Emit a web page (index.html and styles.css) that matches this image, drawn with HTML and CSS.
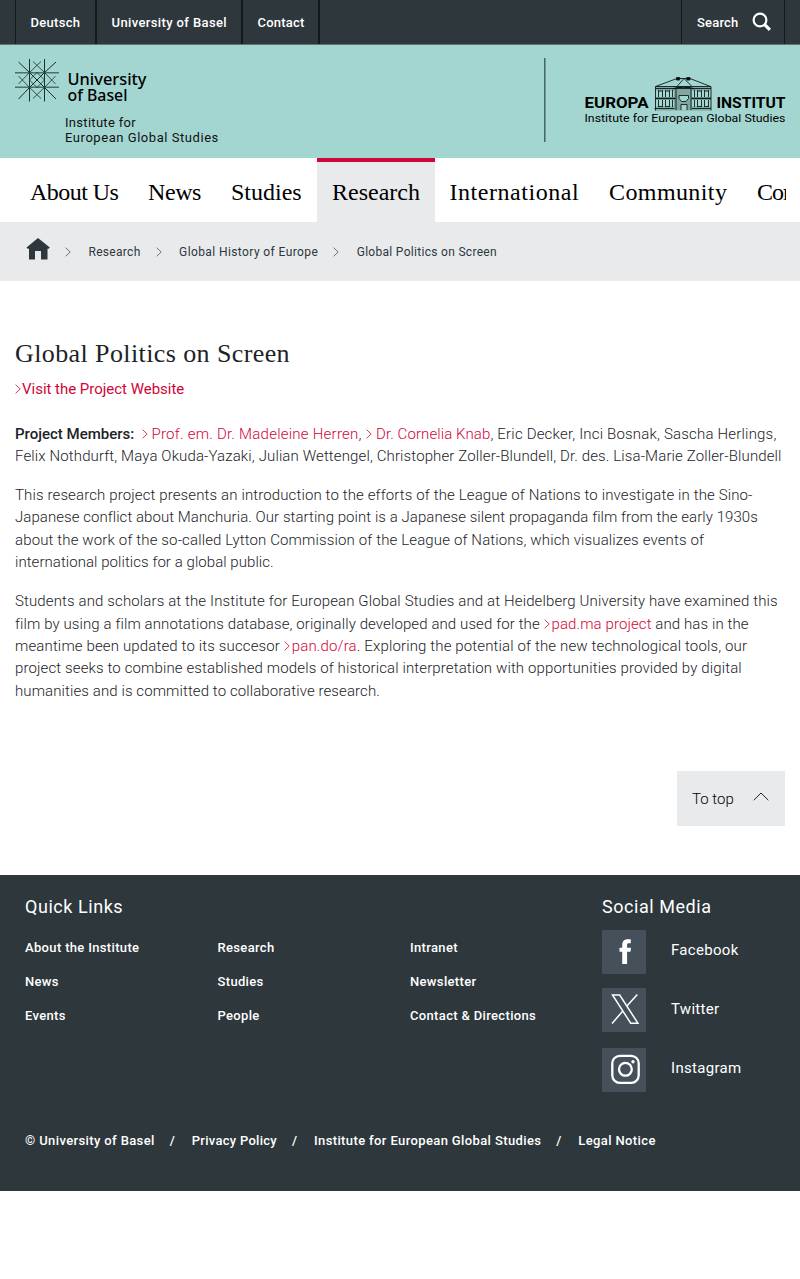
FILE: index.html
```html
<!DOCTYPE html>
<html lang="en">
<head>
<meta charset="utf-8">
<title>Global Politics on Screen</title>
<link rel="stylesheet" href="styles.css">
</head>
<body>
<svg class="defs" width="0" height="0" aria-hidden="true">
  <symbol id="chev" viewBox="0 0 6 10"><path d="M.6.7 5.2 5 .6 9.3" fill="none" stroke="currentColor" stroke-width=".8"/></symbol>
</svg>
<div class="topbar">
  <nav class="meta"><a class="m1">Deutsch</a><a class="m2">University of Basel</a><a class="m3">Contact</a></nav>
  <a class="search"><span>Search</span><svg width="20" height="20" viewBox="0 0 20 20"><circle cx="8" cy="8" r="6.4" fill="none" stroke="#fff" stroke-width="2.2"/><path d="m12.7 12.7 5.2 5.2" stroke="#fff" stroke-width="3.2"/></svg></a>
</div>
<header class="brand">
  <div class="unibas">
    <svg class="logo" width="140" height="48" viewBox="0 0 140 48">
      <g fill="none" stroke="#16302f" stroke-width="1">
        <path d="M14.500 1v42.500M29.500 1v42.500"/>
        <path stroke-width="1.600" stroke="#4b716e" d="M0 14.700h44M0 29.300h44"/>
        <path d="M3.500 4 14.500 14.500 29.500 29.500 41 41M41 4 29.500 14.500 14.500 29.500 3.500 41"/>
        <path stroke-width=".8" d="M14.500 14.500 26 3.500M29.500 14.500 18 3.500M14.500 29.500 26 40.500M29.500 29.500 18 40.500M14.500 14.500 3.500 26M14.500 29.500 3.500 18M29.500 14.500 40.500 26M29.500 29.500 40.500 18M14.500 22 22 14.500 29.500 22 22 29.500z"/>
      </g>
      <g class="logotype"><text x="52.500" y="26.500" textLength="79" lengthAdjust="spacingAndGlyphs">University</text><text x="52.500" y="43" textLength="60" lengthAdjust="spacingAndGlyphs">of Basel</text></g>
    </svg>
    <p class="unit"><span class="unit1">Institute for</span><br><span>European Global Studies</span></p>
  </div>
  <svg class="europa" width="242" height="84" viewBox="0 0 242 84">
    <path d="M.8 0v84" stroke="#355654" stroke-width="1.300"/>
    <g class="inst"><text x="40.500" y="50" textLength="64" lengthAdjust="spacingAndGlyphs">EUROPA</text><text x="172.500" y="50" textLength="69" lengthAdjust="spacingAndGlyphs">INSTITUT</text></g>
    <text class="instsub" x="40.500" y="64.300" textLength="201" lengthAdjust="spacingAndGlyphs">Institute for European Global Studies</text>
    <g fill="none" stroke="#101c1b" stroke-width=".9">
      <path fill="#7fa8a3" stroke="none" d="M111 28.500h56v4h-56zM130 32h18v20h-18zM111 39h56v2.500h-56zM111 48.500h56v4h-56z"/>
      <path d="M111.500 28.500 133 20.500M146 20.500l20.500 8M136 20.500h7M111.500 28.500h55.500M111.500 30.500h55.500M111.500 28.500v24M167 28.500v24M110.500 50.500h20M148 50.500h19M140 20.500l-7 8M140 20.500l8 8"/>
      <path stroke-width="1.300" d="M128.500 31q11-4 22 0M111.500 40.500h20M147.500 40.500h19.500"/>
      <path d="M132 31v21M147 31v21"/>
      <path d="M114.500 32v7M118.500 32v7M121.500 32v7M125.500 32v7M128.500 32v7M150.500 32v7M153.500 32v7M157.500 32v7M160.500 32v7M164.500 32v7M114.500 42v7M118.500 42v7M121.500 42v7M125.500 42v7M128.500 42v7M150.500 42v7M153.500 42v7M157.500 42v7M160.500 42v7M164.500 42v7M114.500 33h4M121.500 33h4M153.500 33h4M160.500 33h4M114.500 48.500h4M121.500 48.500h4M153.500 48.500h4M160.500 48.500h4"/>
      <path fill="#a3d6d0" d="M135 37.500h9.500v3l-2.500 3h-4.500l-2.500-3zM137 52v-5.500h6V52"/>
      <path fill="#000" d="M132.500 19.500h3.200v2.500h-3.200zM142.800 19.500h3.200v2.500h-3.200z"/>
    </g>
  </svg>
</header>
<nav class="main"><a class="n1">About Us</a><a class="n2">News</a><a class="n3">Studies</a><a class="n4 active">Research</a><a class="n5">International</a><a class="n6">Community</a><a class="n7">Continuing Education</a></nav>
<nav class="crumbs">
  <svg class="home" width="24" height="22" viewBox="0 0 24 22"><path d="M12 0 .5 9.500l1.200 1.300H3V21.500H9V13h6v8.500h6.500V10.800h1.100L23.800 9.500z" fill="#2d373c"/></svg>
  <svg class="sep"><use href="#chev"/></svg><a class="c1">Research</a>
  <svg class="sep"><use href="#chev"/></svg><a class="c2">Global History of Europe</a>
  <svg class="sep"><use href="#chev"/></svg><a class="c3">Global Politics on Screen</a>
</nav>
<main class="content">
  <h1>Global Politics on Screen</h1>
  <p class="visit"><a class="link"><svg class="arrow"><use href="#chev"/></svg>Visit the Project Website</a></p>
  <p class="para members"><span class="loose"><b>Project Members:</b>&nbsp; <a class="link herren"><svg class="arrow"><use href="#chev"/></svg>Prof. em. Dr. Madeleine Herren</a>, <a class="link knab"><svg class="arrow"><use href="#chev"/></svg>Dr. Cornelia Knab</a>, Eric Decker, Inci Bosnak, Sascha Herlings,</span><br><span class="std">Felix Nothdurft, Maya Okuda-Yazaki, Julian Wettengel, Christopher Zoller-Blundell, Dr. des. Lisa-Marie Zoller-Blundell</span></p>
  <p class="para"><span class="std">This research project presents an introduction to the efforts of the League of Nations to investigate in the Sino-</span><br><span class="tight">Japanese conflict about Manchuria. Our starting point is a Japanese silent propaganda film from the early 1930s</span><br><span class="wide">about the work of the so-called Lytton Commission of the League of Nations, which visualizes events of</span><br><span class="tight">international politics for a global public.</span></p>
  <p class="para"><span class="std">Students and scholars at the Institute for European Global Studies and at Heidelberg University have examined this</span><br>film by using a film annotations database, originally developed and used for the <a class="link"><svg class="arrow"><use href="#chev"/></svg>pad.ma project</a> and has in the<br><span class="wide">meantime been updated to its succesor <a class="link"><svg class="arrow"><use href="#chev"/></svg>pan.do/ra</a>. Exploring the potential of the new technological tools, our</span><br><span class="std">project seeks to combine established models of historical interpretation with opportunities provided by digital</span><br>humanities and is committed to collaborative research.</p>
  <a class="totop"><span>To top</span><svg width="16" height="9" viewBox="0 0 16 9"><path d="M.7 8.200 8 1l7.300 7.200" fill="none" stroke="#222" stroke-width="1"/></svg></a>
</main>
<footer class="footer">
  <div class="cols">
    <section class="quick"><h2>Quick Links</h2>
      <div class="links"><a>About the Institute</a><a>Research</a><a>Intranet</a><a>News</a><a>Studies</a><a>Newsletter</a><a>Events</a><a>People</a><a>Contact &amp; Directions</a></div>
    </section>
    <section class="social"><h2>Social Media</h2>
      <a><svg width="44" height="44" viewBox="0 0 44 44"><path fill="#fff" d="M20.200 34V21.800h-2.700v-4h2.700v-2.600c0-4 2-6 5.500-6h3.100v4h-2c-1.400 0-1.700.6-1.700 1.900v2.700h3.900l-.5 4h-3.400V34z"/></svg><span>Facebook</span></a>
      <a><svg width="44" height="44" viewBox="0 0 44 44"><path fill="none" stroke="#fff" stroke-width="1.500" d="M10.500 7h7.200l18.200 28.200h-7.200zM35.300 6.500 24.500 18.500M21.300 22.500 10 35.500"/></svg><span>Twitter</span></a>
      <a><svg width="44" height="44" viewBox="0 0 44 44"><g fill="none" stroke="#fff" stroke-width="2.300"><rect x="10.300" y="7.800" width="26.400" height="27" rx="7.500"/><circle cx="23.400" cy="21.300" r="6.400"/></g><circle cx="31" cy="13.700" r="1.700" fill="#fff"/></svg><span>Instagram</span></a>
    </section>
  </div>
  <div class="legal"><a>© University of Basel</a><i>/</i><a class="l2">Privacy Policy</a><i>/</i><a>Institute for European Global Studies</a><i>/</i><a>Legal Notice</a></div>
</footer>
</body>
</html>
```
FILE: styles.css
```css
* { box-sizing: border-box; }
body { margin: 0; background: #fff; color: #1c2327; font-family: Roboto, "Liberation Sans", sans-serif; }
h1, h2, p { margin: 0; font-weight: 400; }
.defs { position: absolute; }

.topbar { display: flex; justify-content: space-between; height: 45px; padding: 0 15px; background: #2d373c; border-bottom: 1px solid #5f7476; color: #fff; font-size: 13px; font-weight: 500; letter-spacing: .2px; line-height: 45px; }
.meta { display: flex; }
.meta a { padding-left: 14.500px; border-right: 2px solid #14191b; }
.meta .m1 { width: 82px; padding-left: 14.500px; border-left: 1px solid #14191b; letter-spacing: .3px; }
.m2 { width: 146px; letter-spacing: .38px; }
.m3 { width: 77px; }
.search { display: flex; align-items: center; gap: 13px; width: 104px; padding-left: 15px; border: 1px solid #14191b; border-width: 0 1px; }

.brand { display: flex; justify-content: space-between; height: 113px; padding: 13px 14px 0 15px; background: #a3d6d0; }
.logo { display: block; }
.logotype { font: 500 17px "Noto Sans", sans-serif; fill: #000; }
.unit { padding: 9px 0 0 50px; color: #111; font-size: 13px; line-height: 15px; letter-spacing: .55px; }
.unit1 { letter-spacing: .3px; }
.inst { font: 700 15.500px Roboto, sans-serif; fill: #000; }
.instsub { font: 400 11px Roboto, sans-serif; fill: #000; }

.main { display: flex; height: 64px; margin: 0 14px 0 15px; overflow: hidden; color: #000; font: 24px/61px "Liberation Serif", serif; white-space: nowrap; }
.main a { flex: none; padding-left: 15px; border-top: 4px solid transparent; }
.main .active { background: #e9eaec; border-top-color: #d20537; }
.n1 { width: 118px; letter-spacing: -.55px; }
.n2 { width: 83px; letter-spacing: -.4px; }
.n3 { width: 101px; }
.n4 { width: 117.500px; letter-spacing: 0; }
.n5 { width: 159.500px; letter-spacing: .55px; }
.n6 { width: 148px; letter-spacing: .4px; }
.n7 { letter-spacing: -1px; }

.crumbs { display: flex; align-items: center; height: 59px; padding-left: 26px; background: #e9eaec; color: #2d373c; font-size: 12px; letter-spacing: .3px; }
.home { margin-top: -6px; }
.sep { width: 6px; height: 10px; margin: 0 17.500px 0 15px; color: #555; }
.home + .sep { margin: 0 17.500px 0 15px; }
.c2 { letter-spacing: .4px; }

.content { display: flex; flex-direction: column; height: 593.500px; padding: 58px 15px 0; }
h1 { font: 26px/30px "Liberation Serif", serif; letter-spacing: .4px; }
.visit { padding-top: 9px; font-size: 15px; line-height: 22px; letter-spacing: -.02px; }
.link { color: #d20537; }
.arrow { width: 6px; height: 10px; margin-right: 2px; }
.visit .arrow { margin-right: 1px; }
.members .arrow { margin-right: 3.500px; }
.para { padding-bottom: 16.600px; font-size: 15px; font-weight: 300; line-height: 22.400px; letter-spacing: .1px; white-space: nowrap; }
.visit + .para { padding-top: 22.600px; }
.para b { font-weight: 500; letter-spacing: 0; }
.std { letter-spacing: .126px; }
.tight { letter-spacing: .055px; }
.wide { letter-spacing: .14px; }
.loose { letter-spacing: .19px; }
.herren { letter-spacing: .24px; }
.knab { margin-left: 1px; letter-spacing: .1px; }
.totop { display: flex; align-self: flex-end; justify-content: space-between; align-items: center; width: 108px; height: 55px; margin-top: 52.600px; padding: 0 16px 0 15px; background: #e9eaec; color: #000; font-size: 15px; font-weight: 300; }
.totop svg { margin-top: -5px; }

.footer { height: 316px; padding: 0 25px; background: #2d373c; color: #fff; font-size: 13px; font-weight: 500; }
.cols { display: grid; grid-template-columns: 577px 1fr; height: 249.500px; padding-top: 20.500px; }
h2 { font-size: 18px; line-height: 24px; letter-spacing: .55px; }
.links { display: grid; grid-template-columns: 192.500px 192.500px 1fr; padding-top: 11.500px; line-height: 34px; letter-spacing: .34px; }
.social { display: flex; flex-direction: column; }
.social a { display: flex; align-items: center; gap: 25px; margin-bottom: 16px; font-size: 15px; font-weight: 400; letter-spacing: .3px; }
.social h2 { margin-bottom: 10.500px; }
.social a:nth-of-type(1) { margin-bottom: 14.400px; }
.social svg { background: #46505b; }
.social span { margin-top: -4px; }
.social a:nth-of-type(2) span { margin-top: -2.500px; }
.legal { display: flex; line-height: 34px; letter-spacing: .38px; }
.legal .l2 { letter-spacing: .28px; }
.legal i { width: 37px; padding-left: 15px; font-style: normal; }
```
